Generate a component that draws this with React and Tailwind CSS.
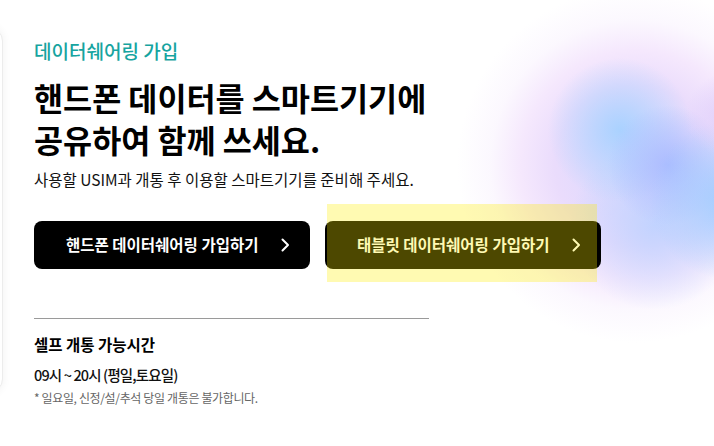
import React from "react";

function Chevron() {
  return (
    <svg width="9" height="14" viewBox="0 0 9 14" fill="none">
      <path d="M1.5 1.5L7 7l-5.5 5.5" stroke="currentColor" strokeWidth="2" strokeLinecap="round" strokeLinejoin="round" />
    </svg>
  );
}

function JoinButton({ label, children }) {
  return (
    <div className="relative">
      <button className="flex h-[48px] w-[276px] items-center justify-between rounded-[8px] bg-black pl-[32px] pr-[20px] text-[15.5px] font-bold text-white">
        <span>{label}</span>
        <Chevron />
      </button>
      {children}
    </div>
  );
}

export default function App() {
  return (
    <div
      className="relative flex w-[714px] h-[446px] overflow-hidden bg-white"
      style={{ fontFamily: '"Noto Sans CJK KR", "Noto Sans", sans-serif' }}
    >
      {/* decorative gradient blob */}
      <div className="pointer-events-none absolute inset-0 bg-[radial-gradient(circle_at_728px_115px,rgba(224,208,251,1)_0,rgba(224,208,251,0)_42px),radial-gradient(circle_at_730px_200px,rgba(158,204,255,1)_0,rgba(158,204,255,0)_80px),radial-gradient(circle_at_668px_165px,rgba(172,188,255,1)_0,rgba(172,188,255,0)_60px),radial-gradient(circle_at_620px_130px,rgba(170,210,255,1)_0,rgba(170,210,255,0)_72px),radial-gradient(circle_at_655px_225px,rgba(190,210,255,0.9)_0,rgba(190,210,255,0)_85px),radial-gradient(circle_at_635px_165px,rgba(214,216,255,1)_0,rgba(234,220,252,1)_80px,rgba(245,232,253,1)_115px,rgba(250,245,254,0.7)_145px,rgba(255,255,255,0)_178px)]" />

      {/* previous card peeking at left */}
      <div className="relative -ml-[300px] mt-[27px] h-[366px] w-[303px] shrink-0 rounded-[14px] border border-[#ececec] bg-white shadow-[0_0_10px_rgba(0,0,0,0.06)]" />

      <div className="relative ml-[31px] flex flex-col pt-[39px]">
        <div className="text-[19px] leading-[24px] font-medium text-[#16a4a0]">
          데이터쉐어링 가입
        </div>
        <h1 className="mt-[13px] text-[31.6px] leading-[42px] font-bold text-black">
          핸드폰 데이터를 스마트기기에
          <br />
          공유하여 함께 쓰세요.
        </h1>
        <p className="mt-[8px] text-[15.5px] leading-[22px] text-[#111]">
          사용할 USIM과 개통 후 이용할 스마트기기를 준비해 주세요.
        </p>

        <div className="mt-[31px] flex gap-[15px]">
          <JoinButton label="핸드폰 데이터쉐어링 가입하기" />
          <JoinButton label="태블릿 데이터쉐어링 가입하기">
            <div className="pointer-events-none absolute left-[2px] top-[-17px] h-[78px] w-[270px] bg-[rgba(255,240,0,0.3)]" />
          </JoinButton>
        </div>

        <div className="mt-[49px] h-px w-[395px] bg-[#9a9a9a]" />

        <div className="mt-[14px] text-[15.5px] leading-[22px] font-bold text-black">
          셀프 개통 가능시간
        </div>
        <div className="mt-[10px] text-[14.5px] leading-[20px] font-medium tracking-[-0.06em] text-[#111]">
          09시 ~ 20시 (평일,토요일)
        </div>
        <div className="mt-[4px] text-[12px] leading-[18px] tracking-[-0.03em] text-[#666]">
          * 일요일, 신정/설/추석 당일 개통은 불가합니다.
        </div>
      </div>
    </div>
  );
}
